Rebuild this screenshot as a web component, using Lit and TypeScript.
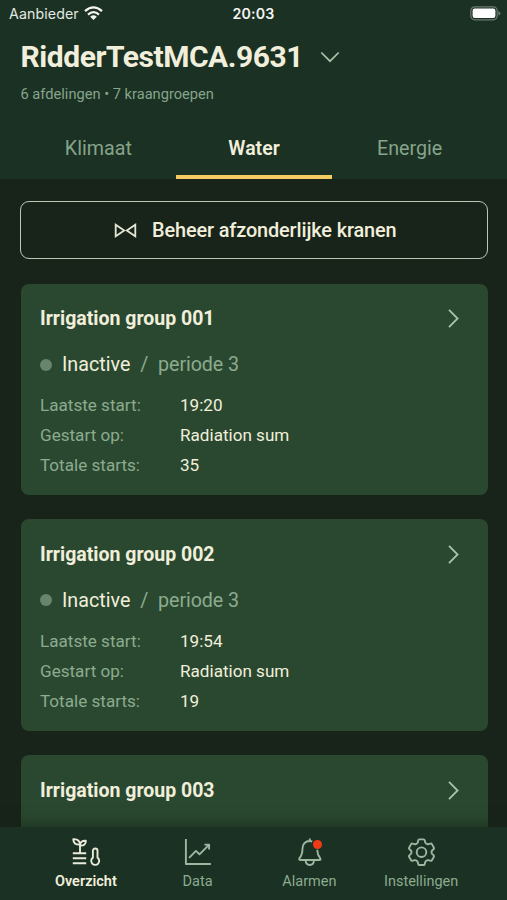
import { LitElement, html, css, svg, nothing } from "lit";
import { customElement, property } from "lit/decorators.js";

const overviewIcon = svg`
  <path d="M8 14.8V6.6M8 6.6C3.4 6.8 1.3 5 1.3 1.2 5.2 .9 7.6 2.4 8 6.6ZM8 7.6C8.1 3.9 10.1 2.5 13.8 2.7 13.9 6.1 12.2 7.9 8 7.6ZM.8 15.2H14.2M.8 20.2H14.2M.8 25.2H14.2" />
  <path d="M20.9 19.6V12.8a2.3 2.3 0 0 1 4.6 0V19.6a4 4 0 1 1-4.6 0Z" />`;
const dataIcon = svg`
  <path d="M2.9 1V26H27.9" />
  <path d="M6.1 19.8 12.9 12.9 16.5 16.3 25.9 6.8M21.5 6.6H26.1V11.4" />`;
const alarmIcon = svg`
  <path d="M14.8 .4V3M14.8 3C10.3 3 7.5 6.3 7.5 10.5 7.5 16 6.3 18 4.5 20.2 3.8 21.3 4.1 22 5.2 22H24.4C25.5 22 25.9 21.3 25.1 20.2 23.3 18 22.4 16 22.2 11.7M14.8 3Q16 3 17.2 3.5M10.6 22.3C11 28.5 18.6 28.5 19 22.3" />`;
const settingsIcon = svg`
  <path d="M12.2 1.4H16.8Q17.5 1.4 17.7 2.2L18.3 4.5Q18.5 5.2 19.2 5.5L20.2 6.1Q20.8 6.4 21.5 6.2L23.7 5.6Q24.5 5.4 24.9 6.1L26.9 9.7Q27.3 10.4 26.7 11L25.1 12.5Q24.6 13 24.6 13.6V14.8Q24.6 15.4 25.1 15.9L26.7 17.4Q27.3 18 26.9 18.7L24.9 22.3Q24.5 23 23.7 22.8L21.5 22.2Q20.8 22 20.2 22.3L19.2 22.9Q18.5 23.2 18.3 23.9L17.7 26.2Q17.5 27 16.8 27H12.2Q11.5 27 11.3 26.2L10.7 23.9Q10.5 23.2 9.8 22.9L8.8 22.3Q8.2 22 7.5 22.2L5.3 22.8Q4.5 23 4.1 22.3L2.1 18.7Q1.7 18 2.3 17.4L3.9 15.9Q4.4 15.4 4.4 14.8V13.6Q4.4 13 3.9 12.5L2.3 11Q1.7 10.4 2.1 9.7L4.1 6.1Q4.5 5.4 5.3 5.6L7.5 6.2Q8.2 6.4 8.8 6.1L9.8 5.5Q10.5 5.2 10.7 4.5L11.3 2.2Q11.5 1.4 12.2 1.4Z" />
  <circle cx="14.5" cy="14.2" r="4.8" />`;

@customElement("group-card")
class GroupCard extends LitElement {
  @property() name = "";
  @property() last = "";
  @property() starts = "";

  static styles = css`
    :host { display: block; box-sizing: border-box; flex: none; height: 211.3px; padding: 20.6px 19.5px; border-radius: 8px; background: #2a482f; color: #f1efdc; }
    .head { display: flex; justify-content: space-between; align-items: center; height: 28.5px; }
    .name { font-size: 19.5px; font-weight: 700; white-space: nowrap; }
    .chevron { width: 11px; height: 19px; margin-right: 9.5px; fill: none; stroke: #a9c3a9; stroke-width: 1.8; }
    .status { display: flex; align-items: center; height: 28px; margin-top: 17.8px; font-size: 19.7px; color: #8cab8f; white-space: pre; }
    .dot { width: 12px; height: 12px; border-radius: 50%; background: #66856b; margin-right: 10px; }
    .state { color: #f1efdc; }
    .slash { margin: 0 9.8px; }
    .period { letter-spacing: -.08px; }
    .facts { display: grid; grid-template-columns: 140px 1fr; grid-auto-rows: 30.1px; align-items: center; margin: 11.2px 0 0; font-size: 17.1px; }
    .label { color: #8cab8f; }
    .value { margin: 0; }
  `;

  render() {
    return html`
      <div class="head">
        <span class="name">${this.name}</span>
        <svg class="chevron" viewBox="0 0 11 19"><path d="M1 .8 9.6 9.5 1 18.2" /></svg>
      </div>
      ${this.last ? html`
        <div class="status"><span class="dot"></span><span class="state">Inactive</span><span class="slash">/</span><span class="period">periode 3</span></div>
        <dl class="facts">
          <dt class="label">Laatste start:</dt><dd class="value">${this.last}</dd>
          <dt class="label">Gestart op:</dt><dd class="value">Radiation sum</dd>
          <dt class="label">Totale starts:</dt><dd class="value">${this.starts}</dd>
        </dl>` : nothing}`;
  }
}

@customElement("app-root")
class AppRoot extends LitElement {
  static styles = css`
    :host { display: flex; flex-direction: column; height: 900px; overflow: hidden; background: #182419; color: #f1efdc; font-family: Roboto, sans-serif; }
    .top { flex: none; height: 179px; background: #1b3123; }
    .statusbar { display: grid; grid-template-columns: 1fr auto 1fr; align-items: center; height: 27px; padding: 0 9px 0 9px; font: 14.2px Inter, sans-serif; color: #e3e8e2; }
    .carrier { display: flex; align-items: center; gap: 5.5px; }
    .carrier-name { letter-spacing: .1px; }
    .wifi { width: 19px; height: 15px; }
    .clock { font-weight: 600; color: #f4f5f2; letter-spacing: .2px; }
    .battery { justify-self: end; width: 31px; height: 15px; margin-right: -2.5px; }
    .title { display: flex; align-items: center; height: 40px; margin: 9.5px 0 0 20.5px; }
    .site { margin: 0; font-size: 30px; font-weight: 700; white-space: nowrap; letter-spacing: -.45px; }
    .down { width: 20px; height: 12px; margin-left: 16.5px; fill: none; stroke: #a9c3a9; stroke-width: 1.7; }
    .sub { margin: 7.5px 0 0 20.5px; height: 20px; line-height: 20px; font-size: 14.65px; color: #86a48b; }
    .tabs { display: flex; height: 60px; margin: 15px 19.5px 0 20.5px; }
    .tab { flex: 1; display: flex; align-items: center; justify-content: center; box-sizing: border-box; padding-top: 2.6px; border-bottom: 4px solid transparent; font-size: 19.7px; color: #86a48b; }
    .tab.active { color: #f1efdc; font-weight: 600; font-size: 19.5px; border-color: #f3cb62; }
    .body { flex: 1; min-height: 0; overflow: hidden; padding: 21.5px 19.5px 0 20.5px; }
    .manage { display: flex; align-items: center; justify-content: center; width: calc(100% + .5px); height: 58.5px; box-sizing: border-box; margin-left: -.5px; padding: 1.4px 0 0; border: 1.5px solid #bec6b6; border-radius: 9px; background: none; color: #f1efdc; font: 500 19.9px Roboto, sans-serif; letter-spacing: -.13px; }
    .valve { width: 23px; height: 15px; margin: 0 15.5px 0 2.5px; fill: none; stroke: #e4e6d5; stroke-width: 1.8; }
    .cards { display: flex; flex-direction: column; gap: 24.5px; margin-top: 24.7px; }
    .nav { position: relative; flex: none; display: flex; box-sizing: border-box; height: 73px; padding: 11px 30px 0; background: #1b3123; box-shadow: 0 -2px 14px rgba(20, 36, 24, .65); }
    .item { flex: 1; display: flex; flex-direction: column; align-items: center; font-size: 14.5px; color: #8cab8f; white-space: nowrap; }
    .item.active { color: #f1efdc; font-weight: 600; }
    .icon { position: relative; height: 29px; color: #9db8a0; }
    .active .icon { color: #e9ead8; margin-left: 1.5px; }
    .glyph { display: block; width: 29px; height: 29px; fill: none; stroke: currentColor; stroke-width: 1.9; stroke-linejoin: round; }
    .alert { position: absolute; right: 1.5px; top: 2px; width: 9px; height: 9px; border-radius: 50%; background: #f03a17; }
    .caption { height: 20px; line-height: 20px; margin-top: 5px; }
  `;

  render() {
    const items = [
      ["Overzicht", overviewIcon],
      ["Data", dataIcon],
      ["Alarmen", alarmIcon],
      ["Instellingen", settingsIcon],
    ] as const;
    return html`
      <header class="top">
        <div class="statusbar">
          <div class="carrier"><span class="carrier-name">Aanbieder</span>
            <svg class="wifi" viewBox="0 0 19 15" fill="none" stroke="#f4f5f2" stroke-width="2.3"><path d="M1 5.2Q9.5-2.4 18 5.2M4 8.6Q9.5 3.7 15 8.6" /><path d="M6.2 10.7Q9.5 8 12.8 10.7L9.5 14Z" fill="#f4f5f2" stroke="none" /></svg>
          </div>
          <span class="clock">20:03</span>
          <svg class="battery" viewBox="0 0 31 15"><rect x=".8" y=".8" width="26.4" height="13" rx="4" fill="none" stroke="#6c7a70" stroke-width="1.2" /><rect x="2.6" y="2.6" width="22.8" height="9.4" rx="2.2" fill="#fff" /><path d="M28.4 5Q30.4 5.7 30.4 7.3T28.4 9.6Z" fill="#6c7a70" /></svg>
        </div>
        <div class="title"><h1 class="site">RidderTestMCA.9631</h1><svg class="down" viewBox="0 0 20 12"><path d="M1.3 1.5 10 10.2 18.7 1.5" /></svg></div>
        <div class="sub">6 afdelingen • 7 kraangroepen</div>
        <nav class="tabs"><span class="tab">Klimaat</span><span class="tab active">Water</span><span class="tab">Energie</span></nav>
      </header>
      <main class="body">
        <button class="manage"><svg class="valve" viewBox="0 0 23 15"><path d="M1.7 1.7V13.3L10.2 7.5ZM21.3 1.7V13.3L12.8 7.5Z" /></svg>Beheer afzonderlijke kranen</button>
        <div class="cards">
          <group-card name="Irrigation group 001" last="19:20" starts="35"></group-card>
          <group-card name="Irrigation group 002" last="19:54" starts="19"></group-card>
          <group-card name="Irrigation group 003"></group-card>
        </div>
      </main>
      <nav class="nav">
        ${items.map(([label, icon], i) => html`
          <div class="item ${i === 0 ? "active" : ""}">
            <div class="icon"><svg class="glyph" viewBox="0 0 29 29">${icon}</svg>${label === "Alarmen" ? html`<span class="alert"></span>` : ""}</div>
            <span class="caption">${label}</span>
          </div>`)}
      </nav>`;
  }
}
